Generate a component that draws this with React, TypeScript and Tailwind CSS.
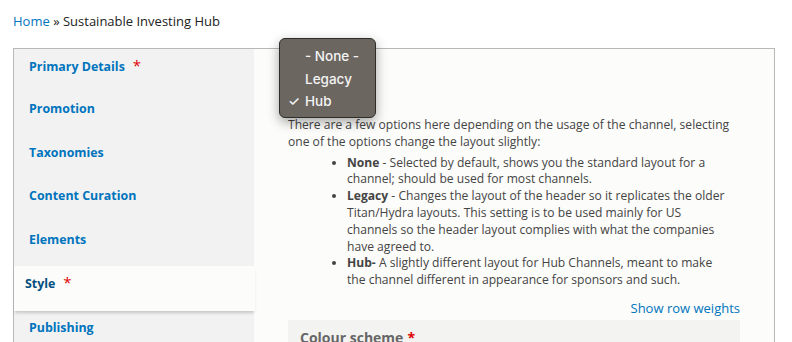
const tabs = [
  { label: "Primary Details", required: true },
  { label: "Promotion" },
  { label: "Taxonomies" },
  { label: "Content Curation" },
  { label: "Elements" },
  { label: "Style", required: true, active: true },
  { label: "Publishing" },
]

function Asterisk() {
  return <span className="ml-[8px] text-[15px] font-normal text-[#e00000]">*</span>
}

function HeaderStyleMenu() {
  return (
    <div
      className="absolute left-[279px] top-[38px] w-[97px] h-[80px] rounded-[6px] border border-[#2f2d2a] bg-[#6b6660] text-[#f4f4f4] shadow-[0_4px_12px_rgba(0,0,0,0.35)] pt-[6px]"
      style={{ fontFamily: "Inter, 'Liberation Sans', sans-serif" }}
    >
      {["- None -", "Legacy", "Hub"].map((opt) => (
        <div key={opt} className="relative h-[22.5px] pl-[25px] text-[13.5px] font-medium leading-[22px]">
          {opt === "Hub" && <span className="absolute left-[8px] top-0">✓</span>}
          {opt}
        </div>
      ))}
    </div>
  )
}

export default function App() {
  return (
    <div
      className="relative w-[792px] h-[342px] overflow-hidden bg-white text-[13px] text-[#333]"
      style={{ fontFamily: "'Open Sans', 'Liberation Sans', sans-serif" }}
    >
      <div className="px-[13px] pt-[12px] h-[48px] leading-[18px] text-[#222]">
        <a className="text-[#0074bd]">Home</a> » Sustainable Investing Hub
      </div>

      <div className="ml-[13px] w-[762px] h-[320px] flex border-l border-t border-r border-[#b8b8b8]">
        <div className="w-[240px] shrink-0 bg-[#f2f2f2] text-[12.4px]">
          {tabs.map((t) =>
            t.active ? (
              <div
                key={t.label}
                className="relative z-10 h-[45px] pt-[8px] pl-[11px] bg-[#fcfcfa] font-bold leading-[17px] text-[#004f80] shadow-[0_3px_3px_-1px_rgba(0,0,0,0.18)] mr-[-1px]"
              >
                {t.label}
                {t.required && <Asterisk />}
              </div>
            ) : (
              <div key={t.label} className="h-[43.4px] pt-[8px] pl-[15px] font-bold leading-[17px] text-[#0074bd]">
                {t.label}
                {t.required && <Asterisk />}
              </div>
            )
          )}
        </div>

        <div className="flex-1 bg-[#fcfcfa] px-[34px] pt-[68px] text-[12.1px] leading-[16.8px] text-[#444]">
          <p>
            There are a few options here depending on the usage of the channel, selecting one of the options change the
            layout slightly:
          </p>
          <ul className="mt-[4px] ml-[59px] mr-[8px] list-disc pl-0">
            <li>
              <b>None</b> - Selected by default, shows you the standard layout for a channel; should be used for most
              channels.
            </li>
            <li>
              <b>Legacy</b> - Changes the layout of the header so it replicates the older Titan/Hydra layouts. This
              setting is to be used mainly for US channels so the header layout complies with what the companies have
              agreed to.
            </li>
            <li>
              <b>Hub-</b> A slightly different layout for Hub Channels, meant to make the channel different in
              appearance for sponsors and such.
            </li>
          </ul>
          <div className="mt-[10px] text-right text-[13px] text-[#0074bd] leading-[18px]">Show row weights</div>
          <div className="mt-[3px] h-[40px] bg-[#f3f3f1] px-[12px] pt-[10px] font-bold text-[14px] text-[#666]">
            Colour scheme
            <span className="ml-[4px] text-[#e00000]">*</span>
          </div>
        </div>
      </div>

      <HeaderStyleMenu />
    </div>
  )
}
